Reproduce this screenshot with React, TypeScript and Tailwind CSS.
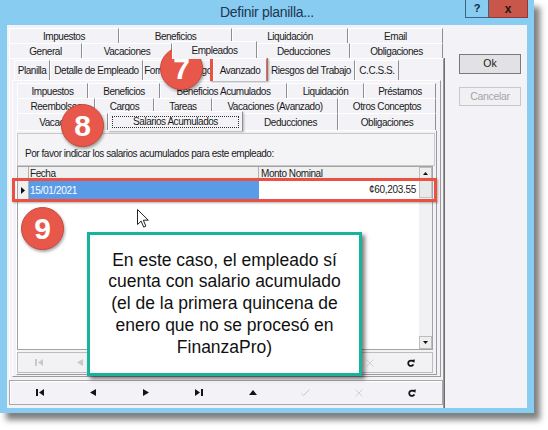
import React from "react"

interface TabSpec {
  label: string
  w: string
  active?: boolean
}

const row1: TabSpec[] = [
  { label: "Impuestos", w: "w-[110px]" },
  { label: "Beneficios", w: "w-[113px]" },
  { label: "Liquidación", w: "w-[116px]" },
  { label: "Email", w: "w-[95px]" },
]

const row2: TabSpec[] = [
  { label: "General", w: "w-[73px]" },
  { label: "Vacaciones", w: "w-[90px]" },
  { label: "Empleados", w: "w-[85px]", active: true },
  { label: "Deducciones", w: "w-[93px]" },
  { label: "Obligaciones", w: "w-[93px]" },
]

const row3: TabSpec[] = [
  { label: "Planilla", w: "w-[36px]" },
  { label: "Detalle de Empleado", w: "w-[93px]" },
  { label: "Formas de Pago", w: "w-[70px]" },
  { label: "Avanzado", w: "w-[54px]", active: true },
  { label: "Riesgos del Trabajo", w: "w-[88px]" },
  { label: "C.C.S.S.", w: "w-[44px]" },
]

const row4: TabSpec[] = [
  { label: "Impuestos", w: "w-[71px]" },
  { label: "Beneficios", w: "w-[72px]" },
  { label: "Beneficios Acumulados", w: "w-[127px]" },
  { label: "Liquidación", w: "w-[77px]" },
  { label: "Préstamos", w: "w-[72px]" },
]

const row5: TabSpec[] = [
  { label: "Reembolsos", w: "w-[78px]" },
  { label: "Cargos", w: "w-[59px]" },
  { label: "Tareas", w: "w-[58px]" },
  { label: "Vacaciones (Avanzado)", w: "w-[126px]" },
  { label: "Otros Conceptos", w: "w-[98px]" },
]

const row6: TabSpec[] = [
  { label: "Vacaciones", w: "w-[91px]" },
  { label: "Salarios Acumulados", w: "w-[135px]", active: true },
  { label: "Deducciones", w: "w-[95px]" },
  { label: "Obligaciones", w: "w-[98px]" },
]

// one row of classic multi-line tabs
const TabRow = ({ tabs, h, activeH }: { tabs: TabSpec[]; h: string; activeH: string }) => (
  <div className={`flex ${h}`}>
    {tabs.map((t) => (
      <div
        key={t.label}
        className={`${t.w} flex items-center justify-center text-[10px] tracking-[-0.45px] text-[#1a1a1a] whitespace-nowrap border-l border-t border-l-white border-t-white border-r border-r-[#8e8e8e] ${
          t.active ? `relative z-10 -mt-[2px] ${activeH} bg-[#f3f2f6]` : ""
        }`}
      >
        {t.label === "Salarios Acumulados" ? (
          <span className="w-[127px] h-[12px] flex items-center justify-center border border-dotted border-[#333]">
            {t.label}
          </span>
        ) : (
          t.label
        )}
      </div>
    ))}
  </div>
)

const NavIcon = ({ kind, dim }: { kind: string; dim?: boolean }) => {
  const c = dim ? "#c9c9c9" : "#141414"
  switch (kind) {
    case "first":
      return (
        <svg width="8" height="7" viewBox="0 0 8 7">
          <rect width="2" height="7" fill={c} />
          <path d="M8 0v7L3 3.5z" fill={c} />
        </svg>
      )
    case "prior":
      return (
        <svg width="6" height="7" viewBox="0 0 6 7">
          <path d="M6 0v7L0 3.5z" fill={c} />
        </svg>
      )
    case "next":
      return (
        <svg width="6" height="7" viewBox="0 0 6 7">
          <path d="M0 0v7l6-3.5z" fill={c} />
        </svg>
      )
    case "last":
      return (
        <svg width="8" height="7" viewBox="0 0 8 7">
          <path d="M0 0v7l5-3.5z" fill={c} />
          <rect x="6" width="2" height="7" fill={c} />
        </svg>
      )
    case "insert":
      return (
        <svg width="8" height="8" viewBox="0 0 8 8">
          <path d="M4 0v8M0 4h8" stroke={c} strokeWidth="1" />
        </svg>
      )
    case "delete":
      return (
        <svg width="8" height="8" viewBox="0 0 8 8">
          <path d="M0 4h8" stroke={c} strokeWidth="1" />
        </svg>
      )
    case "edit":
      return (
        <svg width="8" height="5" viewBox="0 0 8 5">
          <path d="M0 5h8L4 0z" fill={c} />
        </svg>
      )
    case "post":
      return (
        <svg width="9" height="7" viewBox="0 0 9 7">
          <path d="M0.5 4.5l2 2L8.5 0.5" stroke={c} strokeWidth="1" fill="none" />
        </svg>
      )
    case "cancel":
      return (
        <svg width="8" height="8" viewBox="0 0 8 8">
          <path d="M0.5 0.5l7 7M7.5 0.5l-7 7" stroke={c} strokeWidth="0.8" />
        </svg>
      )
    default:
      return (
        <svg width="8" height="8" viewBox="0 0 10 10">
          <path d="M7.6 3.2A3.4 3.4 0 1 0 8 6.8" stroke={c} strokeWidth="2.2" fill="none" />
          <path d="M5.6 1.2L10 0.6 9 5z" fill={c} />
        </svg>
      )
  }
}

const gridNav = ["first", "prior", "next", "last", "insert", "delete", "edit", "post", "cancel", "refresh"]
const mainNav = [
  { k: "first" },
  { k: "prior" },
  { k: "next" },
  { k: "last" },
  { k: "edit" },
  { k: "post", dim: true },
  { k: "cancel", dim: true },
  { k: "refresh" },
]

const Circle = ({ n, pos }: { n: string; pos: string }) => (
  <div
    className={`absolute ${pos} w-[43px] h-[43px] rounded-full bg-[#e8584a] border border-[#c9473a] shadow-[1px_2px_3px_rgba(0,0,0,0.35)] flex items-center justify-center text-white text-[30px] font-bold leading-none`}
  >
    {n}
  </div>
)

export default function App() {
  return (
    <div className="relative w-[548px] h-[430px] bg-white overflow-hidden [font-family:'Liberation_Sans',Arial,sans-serif]">
      <div className="flex flex-col w-[534px] h-[413px] bg-[#88ccf1] shadow-[6px_7px_6px_rgba(0,0,0,0.5)]">
        {/* title bar */}
        <div className="relative h-[25px] flex items-center justify-center">
          <span className="text-[14px] tracking-[-0.3px] text-[#1e3652] -mt-[1px]">Definir planilla...</span>
          <div className="absolute top-0 right-[6px] flex">
            <div className="w-[24px] h-[18px] border border-t-0 border-[#3a6584] flex items-center justify-center text-[11px] font-bold text-[#13263a]">
              ?
            </div>
            <div className="w-[39px] h-[18px] bg-[#c8564b] border border-t-0 border-l-0 border-[#8f3a33] flex items-center justify-center text-[12px] font-bold text-[#2a1410]">
              x
            </div>
          </div>
        </div>

        {/* client */}
        <div className="mx-[7px] mb-[5px] flex-1 flex bg-[#f3f2f6]">
          <div className="ml-[2px] w-[435px] flex flex-col pt-[3px]">
            <TabRow tabs={row1} h="h-[15px]" activeH="h-[17px]" />
            <TabRow tabs={row2} h="h-[15px]" activeH="h-[18px]" />

            {/* Empleados page */}
            <div className="flex-1 flex flex-col border-l border-t border-white border-r border-r-[#9a9a9a] shadow-[1px_0_0_#6e6e6e]">
              <div className="ml-[4px] mt-[1px]">
                <TabRow tabs={row3} h="h-[20px]" activeH="h-[23px]" />
              </div>

              {/* Avanzado page */}
              <div className="ml-[2px] w-[429px] h-[297px] flex flex-col border border-l-white border-t-white border-r-[#9a9a9a] border-b-[#9a9a9a]">
                <div className="ml-[4px] mt-[2px]">
                  <TabRow tabs={row4} h="h-[15px]" activeH="h-[17px]" />
                  <TabRow tabs={row5} h="h-[15px]" activeH="h-[17px]" />
                  <TabRow tabs={row6} h="h-[17px]" activeH="h-[20px]" />
                </div>

                {/* Salarios Acumulados page */}
                <div className="ml-[3px] w-[421px] h-[245px] flex flex-col border border-l-white border-t-white border-r-[#9a9a9a] border-b-[#9a9a9a]">
                  <div className="mt-[2px] w-[418px] h-[33px] border border-[#c9c9cc] bg-[#f4f4f6] pt-[12px] pl-[7px] text-[10px] tracking-[-0.45px] text-[#1a1a1a]">
                    Por favor indicar los salarios acumulados para este empleado:
                  </div>

                  {/* grid */}
                  <div className="w-[416px] h-[184px] flex border border-[#a3a3a3] bg-white">
                    <div className="flex-1 flex flex-col">
                      <div className="h-[13px] flex bg-[#f0f0f0] border-b border-[#b0b0b0] text-[10px] tracking-[-0.45px] text-[#1a1a1a]">
                        <div className="w-[11px] border-r border-[#b0b0b0]" />
                        <div className="w-[230px] border-r border-[#b0b0b0] pl-[1px] leading-[13px]">Fecha</div>
                        <div className="flex-1 pl-[2px] leading-[13px]">Monto Nominal</div>
                      </div>
                      <div className="h-[20px] flex text-[10px] tracking-[-0.3px]">
                        <div className="w-[11px] bg-[#f0f0f0] border-r border-[#b0b0b0] flex items-center justify-center">
                          <svg width="4" height="7" viewBox="0 0 4 7">
                            <path d="M0 0v7l4-3.5z" fill="#111" />
                          </svg>
                        </div>
                        <div className="w-[230px] bg-[#5a9be8] text-white flex items-center pl-[1px]">15/01/2021</div>
                        <div className="flex-1 flex items-center justify-end pr-[3px] text-[#1a1a1a] border-b border-[#e6e6e6]">
                          ¢60,203.55
                        </div>
                      </div>
                      <div className="flex-1 bg-white" />
                    </div>
                    <div className="w-[13px] flex flex-col bg-[#f1f1f3]">
                      <div className="h-[13px] border border-[#bdbdbd] bg-[#eeeeee] flex items-center justify-center">
                        <svg width="5" height="3" viewBox="0 0 5 3">
                          <path d="M0 3h5L2.5 0z" fill="#111" />
                        </svg>
                      </div>
                      <div className="h-[18px] border border-[#c5c5c5] bg-[#e9e9ea]" />
                      <div className="flex-1" />
                      <div className="h-[13px] border border-[#bdbdbd] bg-[#eeeeee] flex items-center justify-center">
                        <svg width="5" height="3" viewBox="0 0 5 3">
                          <path d="M0 0h5L2.5 3z" fill="#111" />
                        </svg>
                      </div>
                    </div>
                  </div>

                  {/* grid navigator */}
                  <div className="mt-[2px] w-[416px] h-[21px] grid grid-cols-10 border border-[#bcbcbc] bg-[#f2f2f4]">
                    {gridNav.map((k) => (
                      <div key={k} className="flex items-center justify-center">
                        <NavIcon kind={k} dim={k !== "refresh"} />
                      </div>
                    ))}
                  </div>
                </div>
              </div>

              {/* main navigator */}
              <div className="mt-[3px] -ml-[1px] w-[434px] h-[25px] grid grid-cols-8 px-[3px] border border-[#a8a8a8] shadow-[inset_1px_1px_0_#fff] bg-[#f3f2f6]">
                {mainNav.map((n) => (
                  <div key={n.k} className="flex items-center justify-center">
                    <NavIcon kind={n.k} dim={n.dim} />
                  </div>
                ))}
              </div>
            </div>
          </div>

          {/* buttons */}
          <div className="ml-[15px] flex flex-col pt-[29px] gap-[13px]">
            <div className="w-[62px] h-[20px] border border-[#7a7a7a] bg-[#e2e2e4] flex items-center justify-center text-[10.5px] text-[#1a1a1a]">
              Ok
            </div>
            <div className="w-[62px] h-[19px] border border-[#c8c8ca] bg-[#f1f1f3] flex items-center justify-center text-[10.5px] tracking-[-0.3px] text-[#a5a5a8]">
              Cancelar
            </div>
          </div>
        </div>
      </div>

      {/* annotations */}
      <div className="absolute left-[210px] top-[58px] w-[58px] h-[23px] border-[3px] border-[#ea5142] shadow-[1px_1px_2px_rgba(0,0,0,0.3)]" />
      <div className="absolute left-[108px] top-[112px] w-[135px] h-[19px] border-[3px] border-[#ea5142] shadow-[1px_1px_2px_rgba(0,0,0,0.3)]" />
      <div className="absolute left-[12px] top-[178px] w-[425px] h-[24px] border-[3px] border-[#ea5142] shadow-[1px_1px_2px_rgba(0,0,0,0.3)]" />

      <Circle n="7" pos="left-[160px] top-[47px]" />
      <Circle n="8" pos="left-[61px] top-[104px]" />
      <Circle n="9" pos="left-[21px] top-[207px]" />

      <svg className="absolute left-[137px] top-[209px]" width="12" height="19" viewBox="0 0 12 19">
        <path d="M0.5 0.5v15l3.6-3.4 2.6 6 2.2-1-2.6-5.9h5z" fill="#fff" stroke="#222" strokeWidth="1" />
      </svg>

      <div className="absolute left-[87px] top-[232px] w-[275px] h-[144px] bg-white border-[3px] border-[#17b49b] shadow-[3px_3px_4px_rgba(0,0,0,0.5)] flex flex-col items-center justify-center text-[17.5px] leading-[21.7px] text-[#111] text-center">
        <span>En este caso, el empleado sí</span>
        <span>cuenta con salario acumulado</span>
        <span>(el de la primera quincena de</span>
        <span>enero que no se procesó en</span>
        <span>FinanzaPro)</span>
      </div>
    </div>
  )
}
